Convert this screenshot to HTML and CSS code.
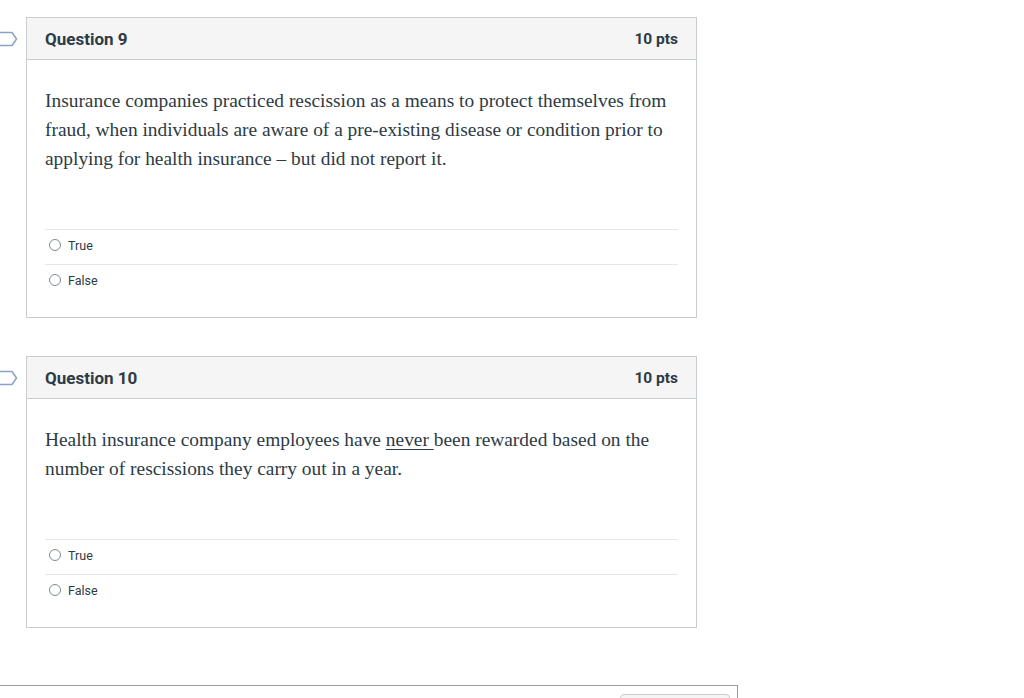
FILE: index.html
```html
<!DOCTYPE html>
<html>
<head>
<meta charset="utf-8">
<link rel="stylesheet" href="styles.css">
</head>
<body>
<div class="quiz">
  <div class="qrow">
    <div class="flag">
      <svg width="18" height="16" viewBox="0 0 18 16"><path d="M-2 1.5 H12 L16.5 8 L12 14.5 H-2" fill="#fff" stroke="#8aa2c8" stroke-width="1.5" stroke-linejoin="round"/></svg>
    </div>
    <div class="card">
      <div class="card-head">
        <span class="qname">Question 9</span>
        <span class="pts">10 pts</span>
      </div>
      <div class="card-body">
        <p class="qtext">Insurance companies practiced rescission as a means to protect themselves from fraud, when individuals are aware of a pre-existing disease or condition prior to applying for health insurance – but did not report it.</p>
        <div class="answers">
          <div class="answer"><span class="radio"></span><span class="alabel">True</span></div>
          <div class="answer"><span class="radio"></span><span class="alabel">False</span></div>
        </div>
      </div>
    </div>
  </div>
  <div class="qrow">
    <div class="flag">
      <svg width="18" height="16" viewBox="0 0 18 16"><path d="M-2 1.5 H12 L16.5 8 L12 14.5 H-2" fill="#fff" stroke="#8aa2c8" stroke-width="1.5" stroke-linejoin="round"/></svg>
    </div>
    <div class="card">
      <div class="card-head">
        <span class="qname">Question 10</span>
        <span class="pts">10 pts</span>
      </div>
      <div class="card-body">
        <p class="qtext">Health insurance company employees have <u class="ul">never&nbsp;</u>been rewarded based on the number of rescissions they carry out in a year.</p>
        <div class="answers">
          <div class="answer"><span class="radio"></span><span class="alabel">True</span></div>
          <div class="answer"><span class="radio"></span><span class="alabel">False</span></div>
        </div>
      </div>
    </div>
  </div>
</div>
<div class="footer">
  <div class="btn"></div>
</div>
</body>
</html>
```

FILE: styles.css
```css
html, body {
  margin: 0;
  padding: 0;
  background: #fff;
}
body {
  font-family: Roboto, "Noto Sans", sans-serif;
  color: #2d3b45;
  overflow: hidden;
}
.quiz {
  padding-top: 17px;
  width: 697px;
}
.qrow {
  display: flex;
  margin-bottom: 38px;
}
.flag {
  width: 26px;
  flex: none;
  padding-top: 14px;
}
.flag svg {
  display: block;
}
.card {
  flex: 1;
  border: 1px solid #c7cdd1;
}
.card-head {
  height: 41px;
  background: #f5f5f5;
  border-bottom: 1px solid #c7cdd1;
  display: flex;
  align-items: center;
  justify-content: space-between;
  padding: 0 18px;
}
.qname {
  font-weight: 700;
  font-size: 17px;
}
.pts {
  font-weight: 700;
  font-size: 15.5px;
  color: #2d3b45;
}
.card-body {
  padding: 26px 18px 18px 18px;
}
.qtext {
  margin: 0;
  font-family: "Liberation Serif", "Times New Roman", serif;
  font-size: 19.4px;
  line-height: 29px;
  color: #2d3b45;
}
.ul {
  text-decoration-thickness: 1px;
  text-underline-offset: 3px;
}
.answers {
  margin-top: 56px;
}
.answer {
  border-top: 1px solid #e5e8ea;
  display: flex;
  align-items: center;
  padding-left: 4px;
  padding-bottom: 4px;
  height: 30px;
}
.radio {
  width: 12px;
  height: 12px;
  border: 1px solid #7d8a94;
  border-radius: 50%;
  box-sizing: border-box;
  margin-right: 7px;
}
.alabel {
  font-size: 12.5px;
  color: #2d3b45;
}
.footer {
  margin-top: 57px;
  width: 737px;
  height: 40px;
  border-top: 1px solid #9b9b9b;
  border-right: 1px solid #9b9b9b;
}
.btn {
  margin-left: 620px;
  margin-top: 8px;
  width: 108px;
  height: 30px;
  border: 1px solid #c7cdd1;
  border-radius: 4px;
  background: #f5f5f5;
}
```
